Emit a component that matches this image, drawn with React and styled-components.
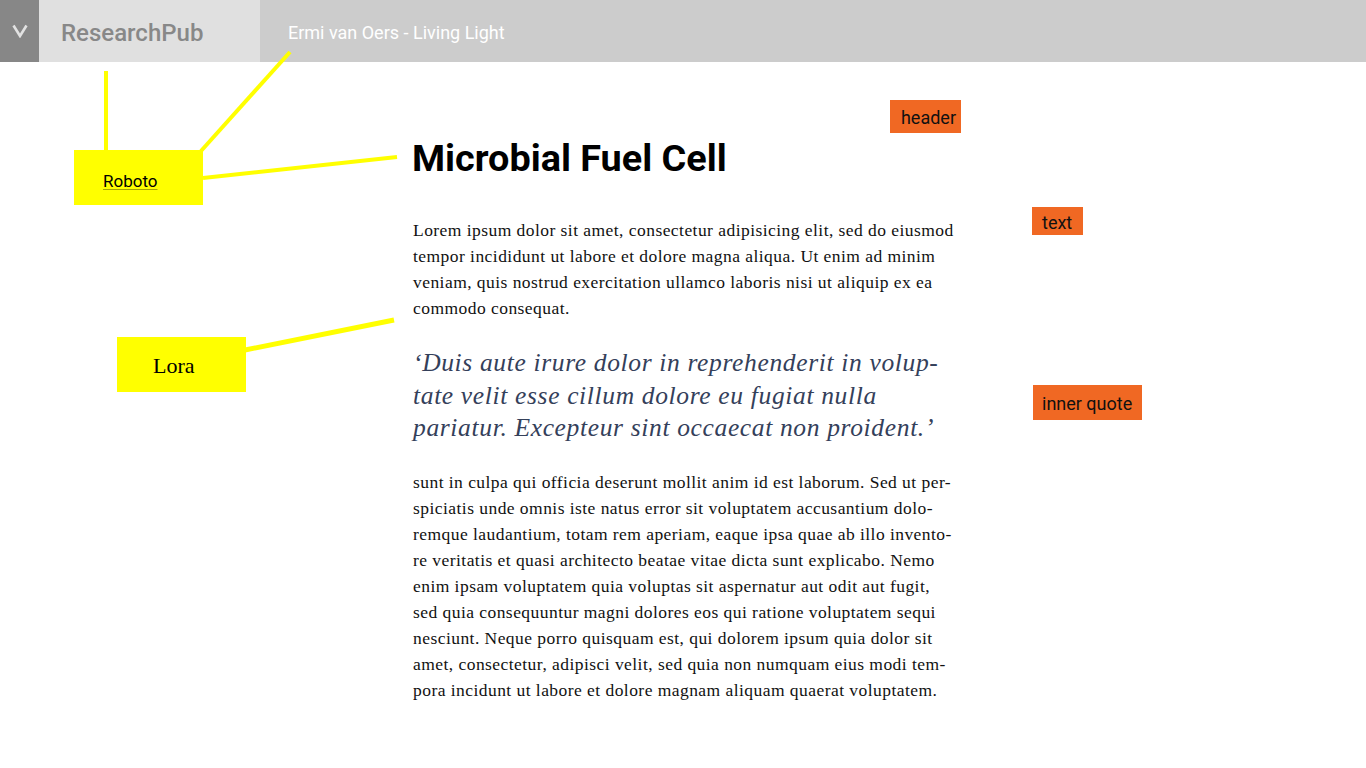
import React from "react";
import styled, { createGlobalStyle } from "styled-components";

const GlobalStyle = createGlobalStyle`
  html, body { margin: 0; padding: 0; background: #ffffff; }
  body { font-family: Roboto, "Liberation Sans", sans-serif; }
`;

const Page = styled.div`
  position: relative;
  width: 1366px;
  min-height: 768px;
  overflow: hidden;
`;

const TopBar = styled.header`
  display: flex;
  align-items: stretch;
  height: 62px;
  background: #cccccc;
`;

const MenuToggle = styled.button`
  display: flex;
  align-items: center;
  justify-content: center;
  width: 39px;
  padding: 0;
  border: 0;
  background: #878787;
`;

const Brand = styled.div`
  display: flex;
  align-items: center;
  width: 221px;
  padding: 4px 0 0 22px;
  box-sizing: border-box;
  background: #e0e0e0;
  color: #888888;
  font-family: Roboto, sans-serif;
  font-weight: 500;
  font-size: 24px;
`;

const DocTitle = styled.div`
  display: flex;
  align-items: center;
  padding: 2px 0 0 28px;
  color: #ffffff;
  font-family: Roboto, sans-serif;
  font-size: 18px;
`;

/* three columns: left annotation rail, article, right annotation rail */
const Layout = styled.main`
  display: grid;
  grid-template-columns: 413px 540px 1fr;
  align-items: start;
  padding-top: 38px;
`;

const LeftNote = styled.div`
  grid-column: 1;
  justify-self: start;
  margin: ${(p) => p.$top}px 0 0 ${(p) => p.$left}px;
`;

const Main = styled.div`
  grid-column: 2;
`;

const RightNote = styled.div`
  grid-column: 3;
  justify-self: start;
  margin: ${(p) => p.$top}px 0 0 ${(p) => p.$left}px;
`;

const HeaderBlock = styled.div`
  grid-column: 2;
  display: flex;
  flex-direction: column;
  gap: 1px;
`;

const Title = styled.h1`
  margin: 0 0 0 -1px;
  font-family: Roboto, sans-serif;
  font-weight: 700;
  font-size: 37.8px;
  line-height: 48px;
  color: #000000;
`;

const Paragraph = styled.p`
  margin: ${(p) => p.$top}px 0 0;
  font-family: "Liberation Serif", serif;
  font-size: 17.5px;
  letter-spacing: 0.45px;
  line-height: 26px;
  color: #111111;
`;

const Quote = styled.blockquote`
  margin: 26px 0 0;
  font-family: "Liberation Serif", serif;
  font-style: italic;
  font-size: 25.5px;
  letter-spacing: 0.65px;
  line-height: 32.5px;
  color: #34405a;
`;

const Line = styled.span`
  display: block;
  white-space: nowrap;
`;

const Connectors = styled.svg`
  position: absolute;
  left: 0;
  top: 0;
  pointer-events: none;
`;

const Callout = styled.div`
  display: flex;
  align-items: center;
  width: 129px;
  height: 55px;
  box-sizing: border-box;
  padding: ${(p) => p.$padTop || 0}px 0 0 ${(p) => p.$pad}px;
  background: #ffff00;
`;

const FontLink = styled.a`
  font-family: ${(p) => (p.$serif ? '"Liberation Serif", serif' : "Roboto, sans-serif")};
  font-size: ${(p) => p.$size}px;
  color: #000000;
  text-decoration: ${(p) => (p.$underline ? "underline" : "none")};
  text-decoration-color: rgba(0, 0, 0, 0.35);
  text-underline-offset: 2px;
`;

const Tag = styled.div`
  display: flex;
  align-items: center;
  height: ${(p) => p.$h}px;
  padding: 2px ${(p) => p.$padR}px 0 ${(p) => p.$padL}px;
  box-sizing: border-box;
  background: #f06823;
  color: #111111;
  font-family: Roboto, sans-serif;
  font-size: 18px;
`;

const HeaderTag = styled(Tag)`
  align-self: flex-end;
  margin-right: -8px;
`;

const para1 = [
  "Lorem ipsum dolor sit amet, consectetur adipisicing elit, sed do eiusmod",
  "tempor incididunt ut labore et dolore magna aliqua. Ut enim ad minim",
  "veniam, quis nostrud exercitation ullamco laboris nisi ut aliquip ex ea",
  "commodo consequat.",
];

const quote = [
  "\u2018Duis aute irure dolor in reprehenderit in volup-",
  "tate velit esse cillum dolore eu fugiat nulla",
  "pariatur. Excepteur sint occaecat non proident.\u2019",
];

const para2 = [
  "sunt in culpa qui officia deserunt mollit anim id est laborum. Sed ut per-",
  "spiciatis unde omnis iste natus error sit voluptatem accusantium dolo-",
  "remque laudantium, totam rem aperiam, eaque ipsa quae ab illo invento-",
  "re veritatis et quasi architecto beatae vitae dicta sunt explicabo. Nemo",
  "enim ipsam voluptatem quia voluptas sit aspernatur aut odit aut fugit,",
  "sed quia consequuntur magni dolores eos qui ratione voluptatem sequi",
  "nesciunt. Neque porro quisquam est, qui dolorem ipsum quia dolor sit",
  "amet, consectetur, adipisci velit, sed quia non numquam eius modi tem-",
  "pora incidunt ut labore et dolore magnam aliquam quaerat voluptatem.",
];

const lines = [
  { x1: 106, y1: 71, x2: 106, y2: 151, w: 4 },
  { x1: 201, y1: 151, x2: 290, y2: 52, w: 4 },
  { x1: 203, y1: 178, x2: 397, y2: 157, w: 4 },
  { x1: 245, y1: 350, x2: 394, y2: 320, w: 5 },
];

export default function App() {
  return (
    <>
      <GlobalStyle />
      <Page>
        <TopBar>
          <MenuToggle aria-label="menu">
            <svg width="16" height="14" viewBox="0 0 16 14">
              <polyline
                points="1.5,1.5 8,12 14.5,1.5"
                fill="none"
                stroke="#e2e2e2"
                strokeWidth="2.6"
              />
            </svg>
          </MenuToggle>
          <Brand>ResearchPub</Brand>
          <DocTitle>Ermi van Oers - Living Light</DocTitle>
        </TopBar>

        <Layout>
          {/* header row */}
          <LeftNote $top={50} $left={74}>
            <Callout $pad={29} $padTop={6}>
              <FontLink href="#roboto" $size={17} $underline>
                Roboto
              </FontLink>
            </Callout>
          </LeftNote>
          <HeaderBlock>
            <HeaderTag $h={33} $padL={11} $padR={5}>header</HeaderTag>
            <Title>Microbial Fuel Cell</Title>
          </HeaderBlock>

          {/* text row */}
          <Main>
            <Paragraph $top={12}>
              {para1.map((l) => (
                <Line key={l}>{l}</Line>
              ))}
            </Paragraph>
          </Main>
          <RightNote $top={2} $left={79}>
            <Tag $h={28} $padL={10} $padR={11}>text</Tag>
          </RightNote>

          {/* quote row */}
          <LeftNote $top={16} $left={117}>
            <Callout $pad={36} $padTop={2}>
              <FontLink href="#lora" $size={22} $serif>
                Lora
              </FontLink>
            </Callout>
          </LeftNote>
          <Main>
            <Quote>
              {quote.map((l) => (
                <Line key={l}>{l}</Line>
              ))}
            </Quote>
          </Main>
          <RightNote $top={64} $left={80}>
            <Tag $h={35} $padL={9} $padR={10}>inner quote</Tag>
          </RightNote>

          {/* second text row */}
          <Main>
            <Paragraph $top={24}>
              {para2.map((l) => (
                <Line key={l}>{l}</Line>
              ))}
            </Paragraph>
          </Main>
        </Layout>

        <Connectors width="1366" height="768">
          {lines.map((c, i) => (
            <line
              key={i}
              x1={c.x1}
              y1={c.y1}
              x2={c.x2}
              y2={c.y2}
              stroke="#ffff00"
              strokeWidth={c.w}
            />
          ))}
        </Connectors>
      </Page>
    </>
  );
}
